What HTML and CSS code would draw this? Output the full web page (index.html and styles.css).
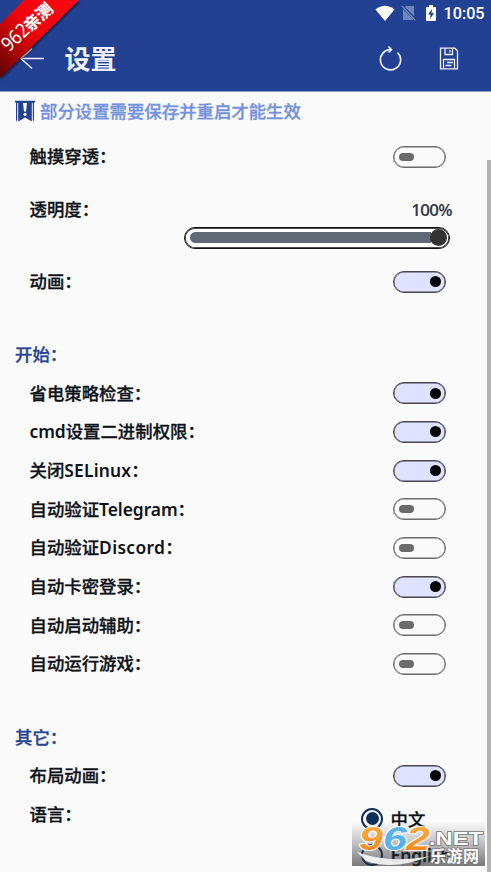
FILE: index.html
```html
<!DOCTYPE html>
<html lang="zh-CN">
<head>
<meta charset="utf-8">
<title>设置</title>
<link rel="stylesheet" href="styles.css">
</head>
<body>
<header class="header">
  <div class="status">
    <svg class="wifi" width="20" height="17" viewBox="0 0 20 17"><path d="M.5 4.5Q10-3 19.5 4.5L10 16Z" fill="#fff"/></svg>
    <svg class="sim" width="15" height="16" viewBox="0 0 15 16"><path d="M5 1H13V11L4 2ZM2 4L12 14V15H2Z" fill="#7186bd"/><path d="M1 1L14 15" stroke="#7186bd" stroke-width="1.3"/></svg>
    <svg class="battery" width="12" height="17" viewBox="0 0 12 17"><path d="M4 0H8V2H10Q11 2 11 3V15Q11 16 10 16H2Q1 16 1 15V3Q1 2 2 2H4Z" fill="#fff"/><path d="M7 4L3 9.5H5.5L5 14L9 8H6.5Z" fill="#234193"/></svg>
    <span class="clock">10:05</span>
  </div>
  <div class="bar">
    <svg class="back" width="26" height="22" viewBox="0 0 26 22"><path d="M25 10.5H2M13 .5L2 10.5L13 20.5" fill="none" stroke="#eef1ff" stroke-width="1.5"/></svg>
    <h1>设置</h1>
    <svg class="reload" width="24" height="26" viewBox="0 0 24 26"><path d="M13 3.7A10.1 10.1 0 1 0 19.5 6.5" fill="none" stroke="#eef1ff" stroke-width="1.7"/><path d="M10.5 .5L13.5 3.7L10.5 6.5" fill="none" stroke="#eef1ff" stroke-width="1.6"/></svg>
    <svg class="save" width="20" height="24" viewBox="0 0 20 24"><g fill="none" stroke="#eef1ff" stroke-width="1.3"><path d="M1.5 1.2H16L18.5 4V21.8H1.5Z"/><path d="M6 1.5V7.5H13.5V1.5M11 3V5.5M4.5 21.5V12.5H15.5V21.5M8 15.5H14M6.5 18.5H12.5"/></g></svg>
  </div>
</header>
<main class="content">
  <div class="notice">
    <svg width="20" height="24" viewBox="0 0 20 24"><path d="M0 .8H20V2.5H19V22L17.8 19.5V3H2.2V19.5L1 22V2.5H0Z" fill="#234193"/><path d="M3.2 2H16.8V21.5L10 17.5L3.2 21.5Z" fill="#234193"/><path d="M8 3H12L11 11.5H9Z" fill="#fff"/><circle cx="10" cy="14.3" r="1.6" fill="#fff"/></svg>
    <span>部分设置需要保存并重启才能生效</span>
  </div>
  <div class="row first"><span>触摸穿透：</span><i class="switch"></i></div>
  <div class="row opacity"><span>透明度：</span><span class="percent">100%</span></div>
  <div class="slider"><div class="track"></div><i class="thumb"></i></div>
  <div class="row anim"><span>动画：</span><i class="switch on"></i></div>
  <h2>开始：</h2>
  <div class="row"><span>省电策略检查：</span><i class="switch on"></i></div>
  <div class="row"><span><b class="latin">cmd</b>设置二进制权限：</span><i class="switch on"></i></div>
  <div class="row"><span>关闭<b class="latin selinux">SELinux</b>：</span><i class="switch on"></i></div>
  <div class="row"><span>自动验证<b class="latin">Telegram</b>：</span><i class="switch"></i></div>
  <div class="row"><span>自动验证<b class="latin discord">Discord</b>：</span><i class="switch"></i></div>
  <div class="row"><span>自动卡密登录：</span><i class="switch on"></i></div>
  <div class="row"><span>自动启动辅助：</span><i class="switch"></i></div>
  <div class="row"><span>自动运行游戏：</span><i class="switch"></i></div>
  <h2>其它：</h2>
  <div class="row"><span>布局动画：</span><i class="switch on"></i></div>
  <div class="language">
    <div class="row"><span>语言：</span></div>
    <div class="choices">
      <div class="choice"><i class="radio checked"></i><span>中文</span></div>
      <div class="choice"><i class="radio"></i><span class="latin">English</span></div>
    </div>
  </div>
</main>
<div class="scrollbar"></div>
<svg class="ribbon" width="84" height="84" viewBox="0 0 84 84">
  <defs><linearGradient id="red" x1="0" y1="78" x2="79" y2="0" gradientUnits="userSpaceOnUse"><stop offset="0" stop-color="#5c0000"/><stop offset=".2" stop-color="#960505"/><stop offset=".5" stop-color="#ee050b"/><stop offset="1" stop-color="#ff0712"/></linearGradient></defs>
  <path class="ribbon-band" d="M0 24L24 0H79L0 78Z" fill="url(#red)"/>
  <g transform="translate(9 52.5) rotate(-43)" fill="#fff"><text class="ribbon-num" x="0" y="0" textLength="30" lengthAdjust="spacingAndGlyphs">962</text><text class="ribbon-cjk" x="29" y="0">亲测</text></g>
</svg>
<svg class="watermark" width="139" height="50" viewBox="0 0 139 50">
  <defs>
    <linearGradient id="orange" x1="0" y1="0" x2="0" y2="1"><stop offset="0" stop-color="#ffb34e"/><stop offset="1" stop-color="#f48312"/></linearGradient>
    <linearGradient id="veil" x1="0" y1="0" x2="0" y2="1"><stop offset="0" stop-color="#333" stop-opacity="0"/><stop offset=".5" stop-color="#333" stop-opacity=".3"/><stop offset="1" stop-color="#333" stop-opacity=".65"/></linearGradient>
  </defs>
  <path d="M0 2H133V46H0Z" fill="url(#veil)"/>
  <path d="M5 32Q36 44 78 36Q42 51 14 41Z" fill="#f8f8f8" fill-opacity=".9"/>
  <g class="mark"><text x="7" y="30" fill="url(#orange)" textLength="24" lengthAdjust="spacingAndGlyphs">9</text><text x="31" y="30" fill="#57b3eb" textLength="24" lengthAdjust="spacingAndGlyphs">6</text><text x="54" y="30" fill="url(#orange)" textLength="24" lengthAdjust="spacingAndGlyphs">2</text></g>
  <text class="net" x="77" y="25" textLength="54" lengthAdjust="spacingAndGlyphs">.NET</text>
  <text class="site" x="78" y="41.5" textLength="49">乐游网</text>
</svg>
</body>
</html>
```
FILE: styles.css
```css
* { box-sizing: border-box; }
body {
  margin: 0;
  height: 872px;
  overflow: hidden;
  position: relative;
  background: #fafafa;
  color: #0d1118;
  font: 500 17.4px/24px "Noto Sans CJK SC", sans-serif;
}
.header { height: 92px; background: #234193; border-bottom: 1px solid #8d9cc5; }
.status { height: 28px; display: flex; align-items: center; padding: 0 0 2px 375px; }
.sim { margin-left: 6px; }
.battery { margin-left: 9px; }
.clock { margin-left: 6.5px; padding-top: 2.5px; color: #fff; font: 500 16.2px/26px Roboto, sans-serif; }
.bar { height: 63px; display: flex; align-items: center; padding: 0 32px 1px 19px; }
h1 { margin: -2px auto 0 19.5px; color: #eef1ff; font-size: 26px; line-height: 34px; font-weight: 700; }
.reload { margin-right: 37px; }
.content { height: 780px; }
.notice { height: 39px; display: flex; align-items: center; gap: 5px; padding-left: 15px; color: #7592df; -webkit-text-stroke: .3px; }
.notice span { margin-top: -2px; }
.row { height: 38.7px; display: flex; align-items: center; justify-content: space-between; padding: 0 45.5px 0 29.5px; }
.row > span:first-child { margin-top: -1.3px; -webkit-text-stroke: .3px; }
.first { margin-top: 6.5px; }
.opacity { margin-top: 14.5px; padding-right: 39px; }
.percent { color: #2c3445; font-family: "Noto Sans", sans-serif; font-weight: 500; font-size: 16.8px; letter-spacing: -.6px; -webkit-text-stroke: .2px; }
.latin { font-family: "Noto Sans", sans-serif; font-weight: 600; letter-spacing: -.05px; }
.selinux { letter-spacing: .2px; }
.discord { letter-spacing: .35px; }
.row .latin { -webkit-text-stroke: 0; }
.switch { width: 53px; height: 22px; border: 1.5px solid #6b6b6b; border-radius: 11px; display: flex; align-items: center; padding: 0 5px; box-shadow: inset 0 0 0 .5px #6b6b6b; }
.switch::before { content: ""; width: 15px; height: 8px; border-radius: 4px; background: #6b6b6b; }
.switch.on { background: #dfe3ff; border-color: #46464c; box-shadow: inset 0 0 0 .5px #46464c; justify-content: flex-end; padding-right: 4px; }
.switch.on::before { width: 11px; height: 11px; border-radius: 50%; background: #000; }
.slider { width: 266px; height: 22px; margin: -2.5px 0 0 184px; display: flex; align-items: center; border: 1px solid #111; box-shadow: inset 0 0 0 .7px #111; border-radius: 11px; padding: 0 2px 0 5px; background: #fff; }
.track { flex: 1; height: 11px; border-radius: 6px 0 0 6px; background: #5f6976; }
.thumb { width: 17px; height: 17px; margin-left: -1px; border-radius: 50%; background: #333; }
.anim { margin-top: 13.5px; }
h2 { height: 38.7px; margin: 34.2px 0 0 15px; color: #274391; font-size: inherit; line-height: 37.3px; font-weight: 500; -webkit-text-stroke: .3px; }
.language { display: flex; justify-content: space-between; }
.choices { width: 130px; padding-top: 5.5px; -webkit-text-stroke: .3px; }
.choice { height: 36.5px; display: flex; align-items: center; gap: 7.5px; }
.radio { width: 22px; height: 22px; display: grid; place-items: center; border: 2px solid #0d2f5a; border-radius: 50%; }
.radio.checked::before { content: ""; width: 13px; height: 13px; border-radius: 50%; background: #0d2f5a; }
.scrollbar { position: absolute; right: 0; top: 160px; width: 4px; bottom: 0; background: #b3b3b3; }
.ribbon { position: absolute; left: 0; top: 0; overflow: visible; }
.ribbon-band { filter: drop-shadow(1px 2px 1px rgba(0, 0, 0, .45)); }
.ribbon-num { font: 400 20px "Noto Sans", sans-serif; }
.ribbon-cjk { font: 900 16.5px "Noto Sans CJK SC", sans-serif; }
.watermark { position: absolute; left: 352px; top: 820px; }
.mark { font: italic 700 33px "Liberation Sans", sans-serif; stroke: #fff; stroke-width: 2px; paint-order: stroke; }
.net { font: 700 18px "Liberation Sans", sans-serif; }
.site { font: 700 16px "Noto Sans CJK SC", sans-serif; }
.net, .site { fill: #fff; stroke: #777; stroke-width: 1.5px; paint-order: stroke; }
```
